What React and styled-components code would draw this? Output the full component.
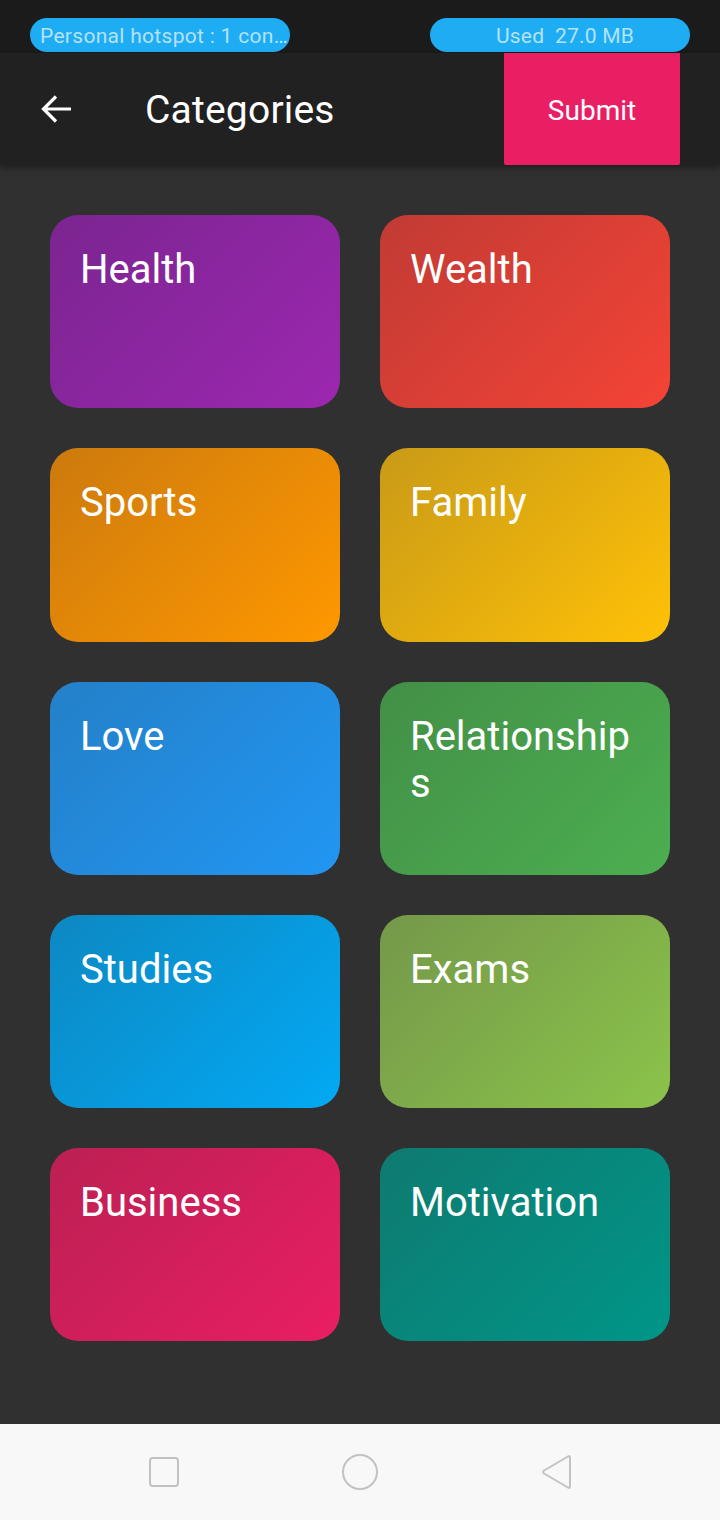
import React from "react";
import styled, { createGlobalStyle } from "styled-components";

const Global = createGlobalStyle`
  html, body { margin: 0; padding: 0; }
  body { background: #303030; font-family: Roboto, "Noto Sans", sans-serif; }
  * { box-sizing: border-box; }
`;

const Screen = styled.div`
  width: 720px;
  height: 1520px;
  display: flex;
  flex-direction: column;
  background: #303030;
  overflow: hidden;
`;

const StatusBar = styled.div`
  height: 53px;
  flex: none;
  background: #1b1b1b;
  display: flex;
  justify-content: space-between;
  align-items: flex-start;
  padding: 18px 30px 0;
`;

const Pill = styled.div`
  width: 260px;
  height: 34px;
  border-radius: 17px;
  background: #1eadf3;
  color: #b5e2fb;
  font-size: 21px;
  line-height: 36px;
  padding: 0 0 0 10px;
  letter-spacing: ${(p) => (p.$center ? "0.2px" : "0.3px")};
  text-align: ${(p) => (p.$center ? "center" : "left")};
  white-space: nowrap;
  overflow: hidden;
`;

const AppBar = styled.div`
  height: 112px;
  flex: none;
  background: #212121;
  display: flex;
  align-items: center;
  padding-left: 40px;
  padding-right: 40px;
  box-shadow: 0 3px 6px rgba(0, 0, 0, 0.35);
  position: relative;
  z-index: 1;
`;

const BackButton = styled.div`
  width: 32px;
  height: 32px;
  display: flex;
  align-items: center;
  justify-content: center;
`;

const Title = styled.div`
  margin-left: 73px;
  padding-top: 2px;
  color: #fff;
  font-size: 39px;
  letter-spacing: 0.2px;
  flex: 1;
`;

const Submit = styled.div`
  width: 176px;
  height: 112px;
  background: #e91e63;
  color: #fff;
  font-size: 28px;
  padding-top: 2px;
  display: flex;
  align-items: center;
  justify-content: center;
  border-radius: 0 0 2px 2px;
`;

const Grid = styled.div`
  flex: 1;
  display: grid;
  grid-template-columns: 290px 290px;
  grid-auto-rows: 193.25px;
  column-gap: 40px;
  row-gap: 40px;
  padding: 50px 50px 0;
`;

const Card = styled.div`
  border-radius: 28px;
  background: linear-gradient(135deg, ${(p) => p.$from}, ${(p) => p.$to});
  color: #fff;
  font-size: 40px;
  line-height: 47px;
  padding: 31px 30px;
  word-break: break-all;
`;

const NavBar = styled.div`
  height: 96px;
  flex: none;
  background: #f8f8f8;
  display: grid;
  grid-template-columns: repeat(3, 56px);
  justify-content: center;
  column-gap: 140px;
  align-items: center;
`;

const NavIcon = styled.div`
  display: flex;
  align-items: center;
  justify-content: center;
`;

const cats = [
  ["Health", "#7b2590", "#9c27b0"],
  ["Wealth", "#c13b34", "#f44336"],
  ["Sports", "#cc7a0e", "#ff9800"],
  ["Family", "#c99a17", "#ffc107"],
  ["Love", "#2480c8", "#2196f3"],
  ["Relationships", "#438f47", "#4caf50"],
  ["Studies", "#0d88c2", "#03a9f4"],
  ["Exams", "#74984a", "#8bc34a"],
  ["Business", "#bb2053", "#e91e63"],
  ["Motivation", "#0f7a70", "#009688"],
];

export default function App() {
  return (
    <>
      <Global />
      <Screen>
        <StatusBar>
          <Pill>Personal hotspot : 1 con…</Pill>
          <Pill $center>Used&nbsp; 27.0 MB</Pill>
        </StatusBar>
        <AppBar>
          <BackButton>
            <svg width="32" height="32" viewBox="0 0 32 32">
              <path d="M31 16H4M16 3.5L3.5 16 16 28.5" fill="none" stroke="#fff" strokeWidth="3.2" />
            </svg>
          </BackButton>
          <Title>Categories</Title>
          <Submit>Submit</Submit>
        </AppBar>
        <Grid>
          {cats.map(([name, a, b]) => (
            <Card key={name} $from={a} $to={b}>
              {name}
            </Card>
          ))}
        </Grid>
        <NavBar>
          <NavIcon>
            <svg width="32" height="32" viewBox="0 0 32 32">
              <rect x="2" y="2" width="28" height="28" rx="3" fill="none" stroke="#c2c2c2" strokeWidth="2" />
            </svg>
          </NavIcon>
          <NavIcon>
            <svg width="38" height="38" viewBox="0 0 38 38">
              <circle cx="19" cy="19" r="17" fill="none" stroke="#c2c2c2" strokeWidth="2" />
            </svg>
          </NavIcon>
          <NavIcon>
            <svg width="36" height="38" viewBox="0 0 36 38">
              <path d="M30 3.5 Q32 2.5 32 5 V33 Q32 35.5 30 34.5 L6 20.5 Q4.5 19 6 17.5 Z" fill="none" stroke="#c2c2c2" strokeWidth="2" strokeLinejoin="round" />
            </svg>
          </NavIcon>
        </NavBar>
      </Screen>
    </>
  );
}
